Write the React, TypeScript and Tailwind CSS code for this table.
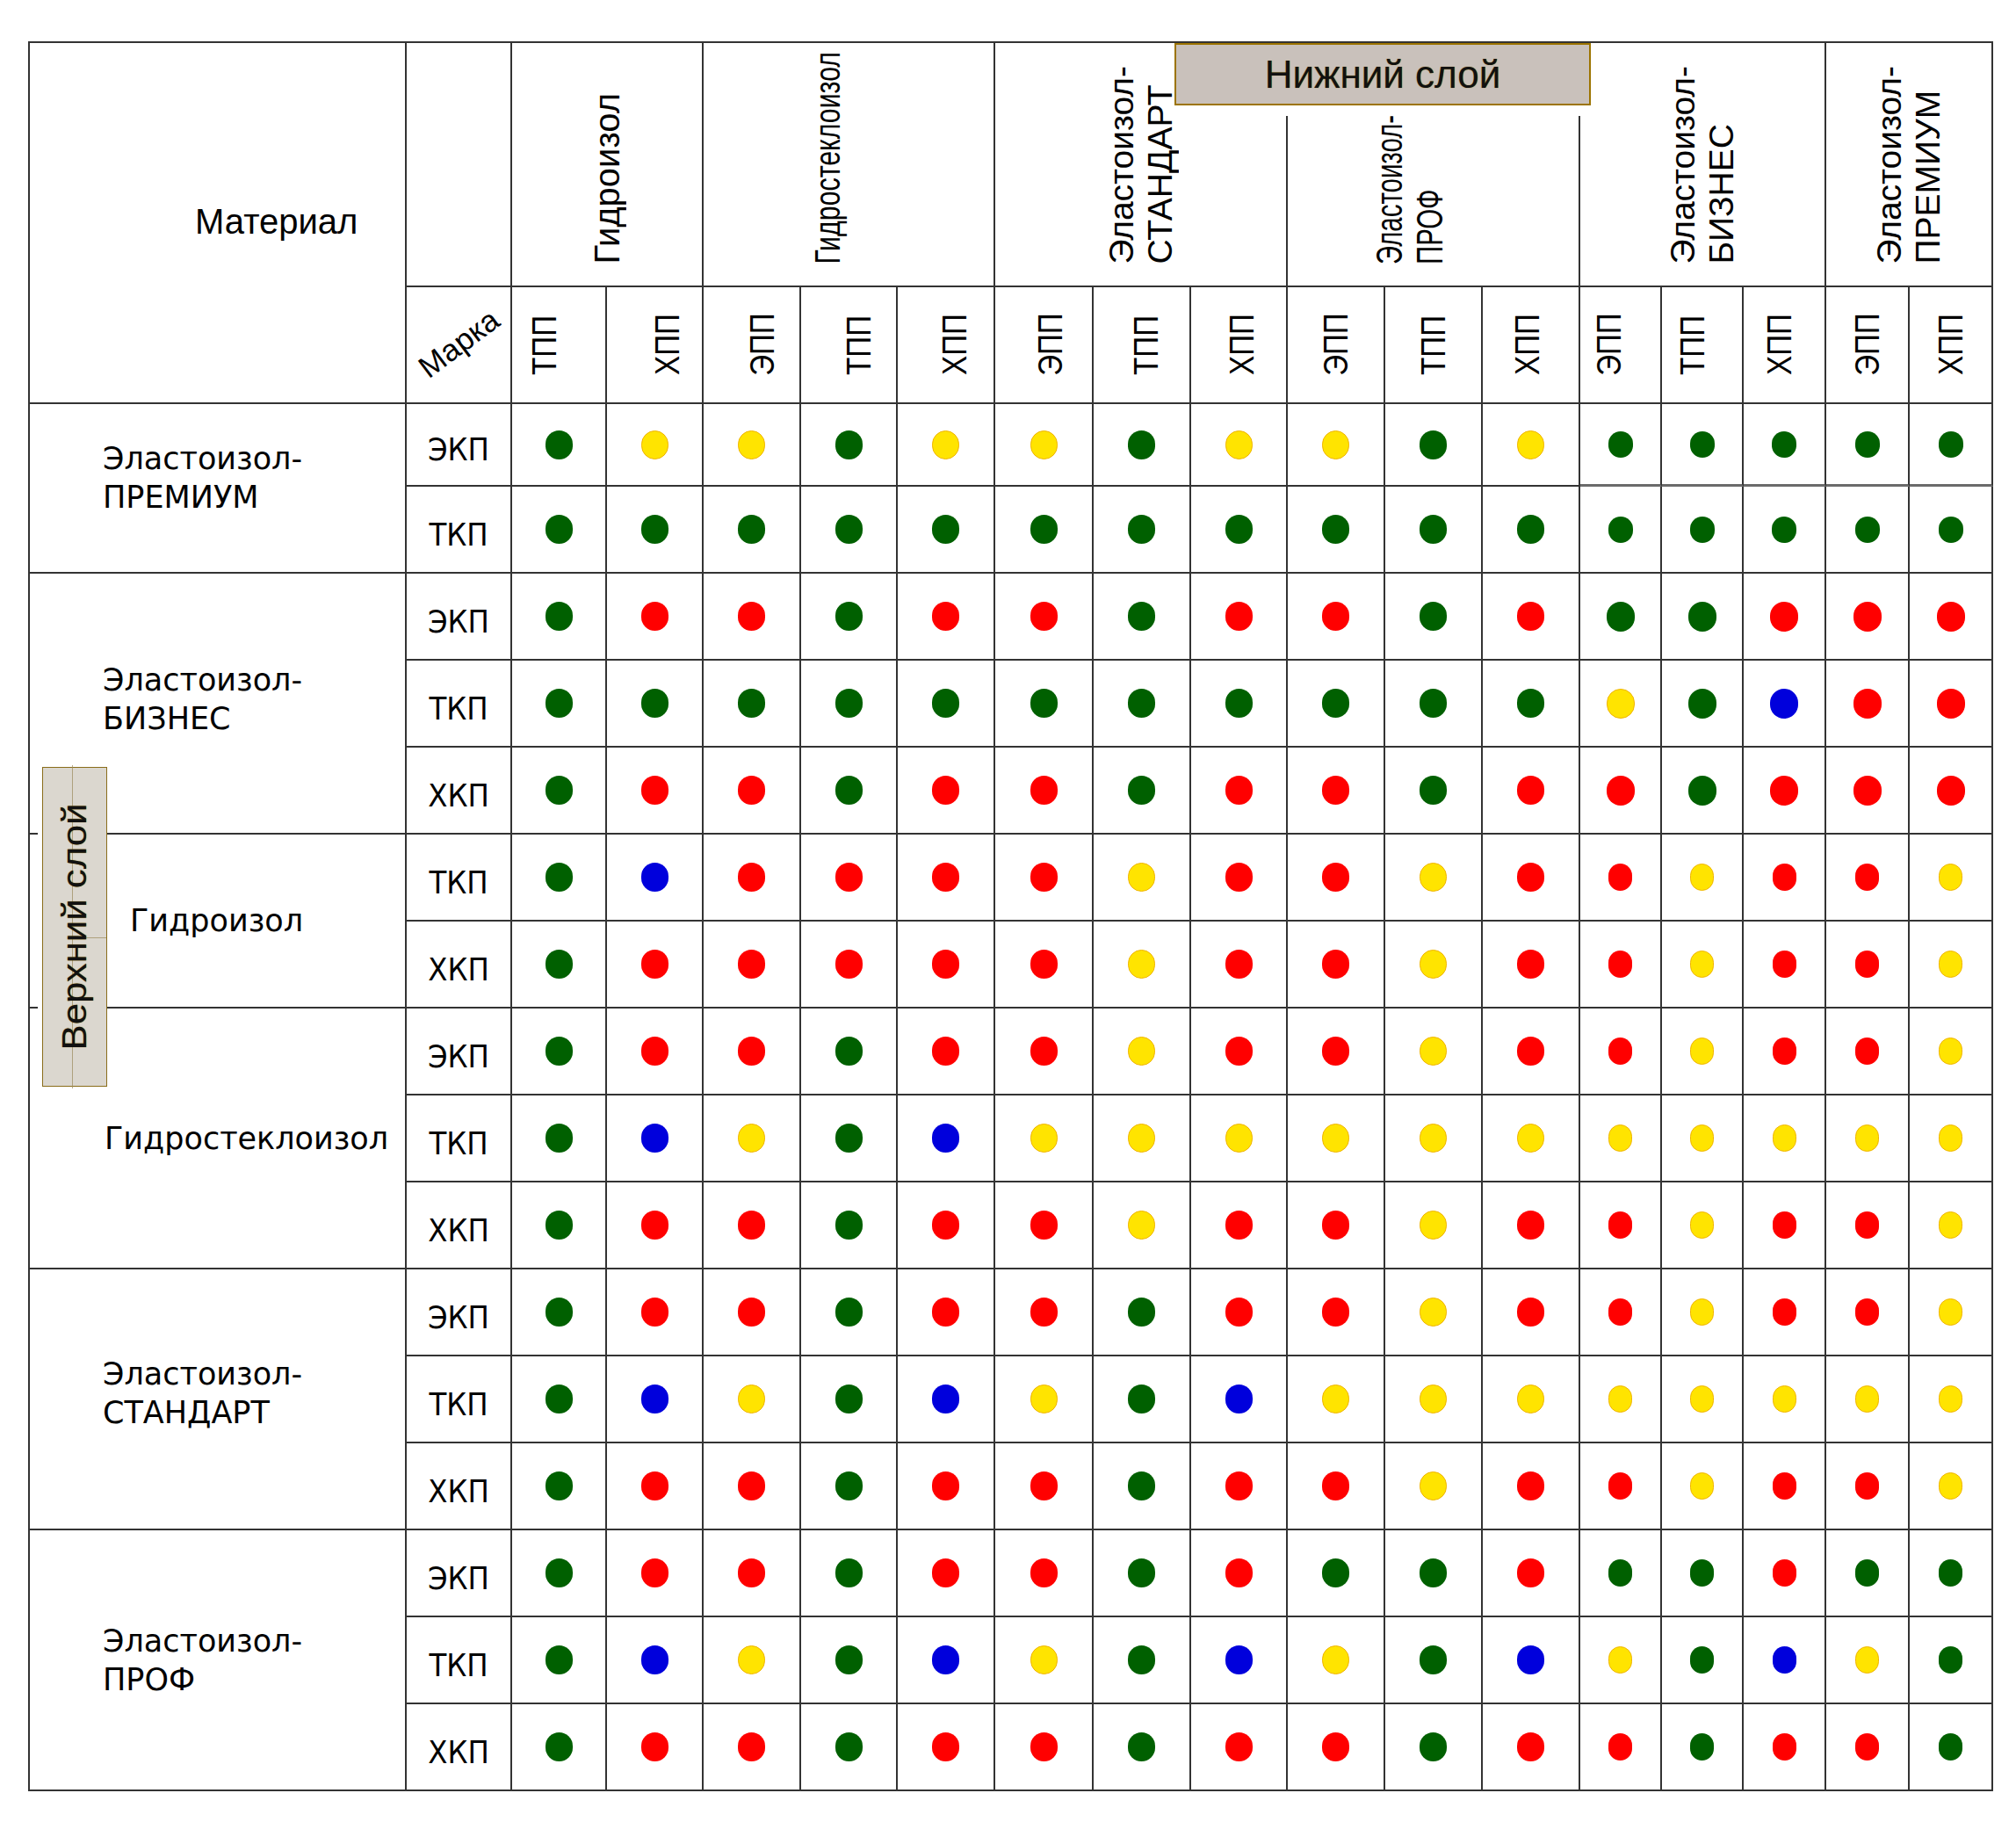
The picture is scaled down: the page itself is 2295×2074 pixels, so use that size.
import React from 'react';

type DotColor = 'G' | 'Y' | 'R' | 'B';

const cellBase = 'border-r-2 border-[#333]';

// narrow = Arial Narrow look, done by squeezing Liberation Sans along the text direction
const groups = [
    { key: 'g', lines: ['Гидроизол'], span: 'col-span-2', text: 'text-[40px] leading-[44px]', squeeze: '', pad: '' },
    { key: 'gs', lines: ['Гидростеклоизол'], span: 'col-span-3', text: 'text-[41px] leading-[44px]', squeeze: 'scale-y-[0.74]', pad: 'pr-[48px]' },
    { key: 'st', lines: ['Эластоизол-', 'СТАНДАРТ'], span: 'col-span-3', text: 'text-[39px] leading-[44px]', squeeze: '', pad: '' },
    { key: 'pf', lines: ['Эластоизол-', 'ПРОФ'], span: 'col-span-3', text: 'text-[42px] leading-[46px]', squeeze: 'scale-y-[0.7]', pad: 'pr-[54px]' },
    { key: 'bz', lines: ['Эластоизол-', 'БИЗНЕС'], span: 'col-span-3', text: 'text-[39px] leading-[44px]', squeeze: '', pad: '' },
    { key: 'pr', lines: ['Эластоизол-', 'ПРЕМИУМ'], span: 'col-span-2', text: 'text-[39px] leading-[44px]', squeeze: '', pad: '' },
];

// sub-column labels, with the small offsets seen in the picture
const subs = [
    { label: 'ТПП', pad: 'pr-[34px]' },
    { label: 'ХПП', pad: 'pl-[28px]' },
    { label: 'ЭПП', pad: 'pl-[24px]' },
    { label: 'ТПП', pad: 'pl-[22px]' },
    { label: 'ХПП', pad: 'pl-[20px]' },
    { label: 'ЭПП', pad: 'pl-[14px]' },
    { label: 'ТПП', pad: 'pl-[10px]' },
    { label: 'ХПП', pad: 'pl-[6px]' },
    { label: 'ЭПП', pad: '' },
    { label: 'ТПП', pad: '' },
    { label: 'ХПП', pad: 'pr-[8px]' },
    { label: 'ЭПП', pad: 'pr-[26px]' },
    { label: 'ТПП', pad: 'pr-[22px]' },
    { label: 'ХПП', pad: 'pr-[12px]' },
    { label: 'ЭПП', pad: '' },
    { label: 'ХПП', pad: '' },
];

const sections = [
    {
        key: 'premium',
        name: ['Эластоизол-', 'ПРЕМИУМ'],
        span: 'row-span-2',
        pad: 'pl-[83px] pb-[24px]',
        rows: [
            { mark: 'ЭКП', dots: 'GYYGYYGYYGYGGGGG' },
            { mark: 'ТКП', dots: 'GGGGGGGGGGGGGGGG' },
        ],
    },
    {
        key: 'biznes',
        name: ['Эластоизол-', 'БИЗНЕС'],
        span: 'row-span-3',
        pad: 'pl-[83px] pb-[10px]',
        rows: [
            { mark: 'ЭКП', dots: 'GRRGRRGRRGRGGRRR' },
            { mark: 'ТКП', dots: 'GGGGGGGGGGGYGBRR' },
            { mark: 'ХКП', dots: 'GRRGRRGRRGRRGRRR' },
        ],
    },
    {
        key: 'gidroizol',
        name: ['Гидроизол'],
        span: 'row-span-2',
        pad: 'pl-[114px]',
        rows: [
            { mark: 'ТКП', dots: 'GBRRRRYRRYRRYRRY' },
            { mark: 'ХКП', dots: 'GRRRRRYRRYRRYRRY' },
        ],
    },
    {
        key: 'gidrosteklo',
        name: ['Гидростеклоизол'],
        span: 'row-span-3',
        pad: 'pl-[85px]',
        rows: [
            { mark: 'ЭКП', dots: 'GRRGRRYRRYRRYRRY' },
            { mark: 'ТКП', dots: 'GBYGBYYYYYYYYYYY' },
            { mark: 'ХКП', dots: 'GRRGRRYRRYRRYRRY' },
        ],
    },
    {
        key: 'standart',
        name: ['Эластоизол-', 'СТАНДАРТ'],
        span: 'row-span-3',
        pad: 'pl-[83px] pb-[14px]',
        rows: [
            { mark: 'ЭКП', dots: 'GRRGRRGRRYRRYRRY' },
            { mark: 'ТКП', dots: 'GBYGBYGBYYYYYYYY' },
            { mark: 'ХКП', dots: 'GRRGRRGRRYRRYRRY' },
        ],
    },
    {
        key: 'prof',
        name: ['Эластоизол-', 'ПРОФ'],
        span: 'row-span-3',
        pad: 'pl-[83px]',
        rows: [
            { mark: 'ЭКП', dots: 'GRRGRRGRGGRGGRGG' },
            { mark: 'ТКП', dots: 'GBYGBYGBYGBYGBYG' },
            { mark: 'ХКП', dots: 'GRRGRRGRRGRRGRRG' },
        ],
    },
];

const dotColor = (c: DotColor) => {
    switch (c) {
        case 'G':
            return 'bg-[#006000]';
        case 'Y':
            return 'bg-[#ffe400] border-[1.5px] border-[#f0b400]';
        case 'R':
            return 'bg-[#ff0000]';
        case 'B':
            return 'bg-[#0000dc]';
    }
};

const dotSize = (row: number, col: number) => {
    if (col < 11) return 'w-[31px] h-[33px]';
    if (row <= 1) return 'w-[28px] h-[30px]';
    if (row <= 4) return 'w-[32px] h-[34px]';
    return 'w-[27px] h-[31px]';
};

export default function App() {
    let globalRow = -1;

    return (
        <div className="min-h-[2074px] w-[2295px] bg-white pl-[32px] pt-[47px] font-['Liberation_Sans',Arial,sans-serif] text-black">
            <div className="relative w-max">
                <div className="grid grid-cols-[429px_120px_108px_110px_111px_110px_111px_112px_111px_110px_111px_111px_111px_93px_93px_94px_95px_95px] grid-rows-[278px_133px_94px_repeat(15,99px)] border-l-2 border-t-2 border-[#333]">
                    {/* Header: Material */}
                    <div className={`${cellBase} border-b-2 row-span-2 flex items-center pl-[188px] pb-[4px]`}>
                        <span className="text-[40px] leading-none">Материал</span>
                    </div>
                    <div className={`${cellBase} border-b-2`} />

                    {/* Header: lower layer groups */}
                    {groups.map((g) => (
                        <div key={g.key} className={`${cellBase} border-b-2 ${g.span} flex items-end justify-center pb-[24px] ${g.pad}`}>
                            <div className={`[writing-mode:vertical-rl] rotate-180 whitespace-nowrap text-left ${g.text}`}>
                                <div className={`origin-top ${g.squeeze}`}>
                                    {g.lines.map((l) => (
                                        <div key={l}>{l}</div>
                                    ))}
                                </div>
                            </div>
                        </div>
                    ))}

                    {/* Header: Марка + sub columns */}
                    <div className={`${cellBase} border-b-2 flex items-center justify-center pb-[4px]`}>
                        <span className="rotate-[-37deg] text-[35px] leading-none">Марка</span>
                    </div>
                    {subs.map((s, i) => (
                        <div key={i} className={`${cellBase} border-b-2 flex items-center justify-center ${s.pad}`}>
                            <span className="[writing-mode:vertical-rl] rotate-180 scale-y-[0.85] text-[39px] leading-none">{s.label}</span>
                        </div>
                    ))}

                    {/* Body */}
                    {sections.map((sec) => (
                        <React.Fragment key={sec.key}>
                            <div className={`${cellBase} border-b-2 ${sec.span} flex items-center ${sec.pad}`}>
                                <div className="font-['DejaVu_Sans',Verdana,sans-serif] text-[35px] leading-[44px]">
                                    {sec.name.map((l) => (
                                        <div key={l}>{l}</div>
                                    ))}
                                </div>
                            </div>
                            {sec.rows.map((r) => {
                                globalRow += 1;
                                const rowIdx = globalRow;
                                return (
                                    <React.Fragment key={sec.key + r.mark}>
                                        <div className={`${cellBase} border-b-2 flex items-center justify-center pt-[12px]`}>
                                            <span className="font-['DejaVu_Sans_Condensed','DejaVu_Sans',sans-serif] text-[36px] leading-none">
                                                {r.mark}
                                            </span>
                                        </div>
                                        {r.dots.split('').map((d, ci) => (
                                            <div
                                                key={ci}
                                                className={`${cellBase} ${
                                                    rowIdx === 0 && ci >= 11 ? 'border-b-[3px] border-b-[#6a6a6a]' : 'border-b-2'
                                                } flex items-center justify-center`}
                                            >
                                                <span className={`rounded-full ${dotSize(rowIdx, ci)} ${dotColor(d as DotColor)}`} />
                                            </div>
                                        ))}
                                    </React.Fragment>
                                );
                            })}
                        </React.Fragment>
                    ))}
                </div>

                {/* Нижний слой label */}
                <div className="absolute left-[1304px] top-[2px] h-[83px] w-[476px] bg-white">
                    <div className="mx-[1px] flex h-[71px] items-center justify-center border-2 border-[#9c7400] bg-[#c9c1bb]">
                        <span className="text-[44px] leading-none text-[#111] [text-shadow:0_0_1px_#a07a00]">Нижний слой</span>
                    </div>
                </div>

                {/* Верхний слой label */}
                <div className="absolute left-[11px] top-[826px] bg-white pl-[5px]">
                    <div className="relative flex h-[364px] w-[74px] items-center justify-center border border-[#8a6d1a] bg-[#dbd7cf]">
                        <div className="absolute inset-y-[-3px] left-[33px] w-px bg-[#9b8a5a]/70" />
                        <div className="absolute left-[33px] right-0 top-[193px] h-px bg-[#9b8a5a]/70" />
                        <span className="relative whitespace-nowrap text-[38px] leading-none text-[#111] [text-shadow:0_0_1px_#a07a00] [transform:rotate(-90deg)_scaleX(1.15)]">
                            Верхний слой
                        </span>
                    </div>
                </div>
            </div>
        </div>
    );
}
